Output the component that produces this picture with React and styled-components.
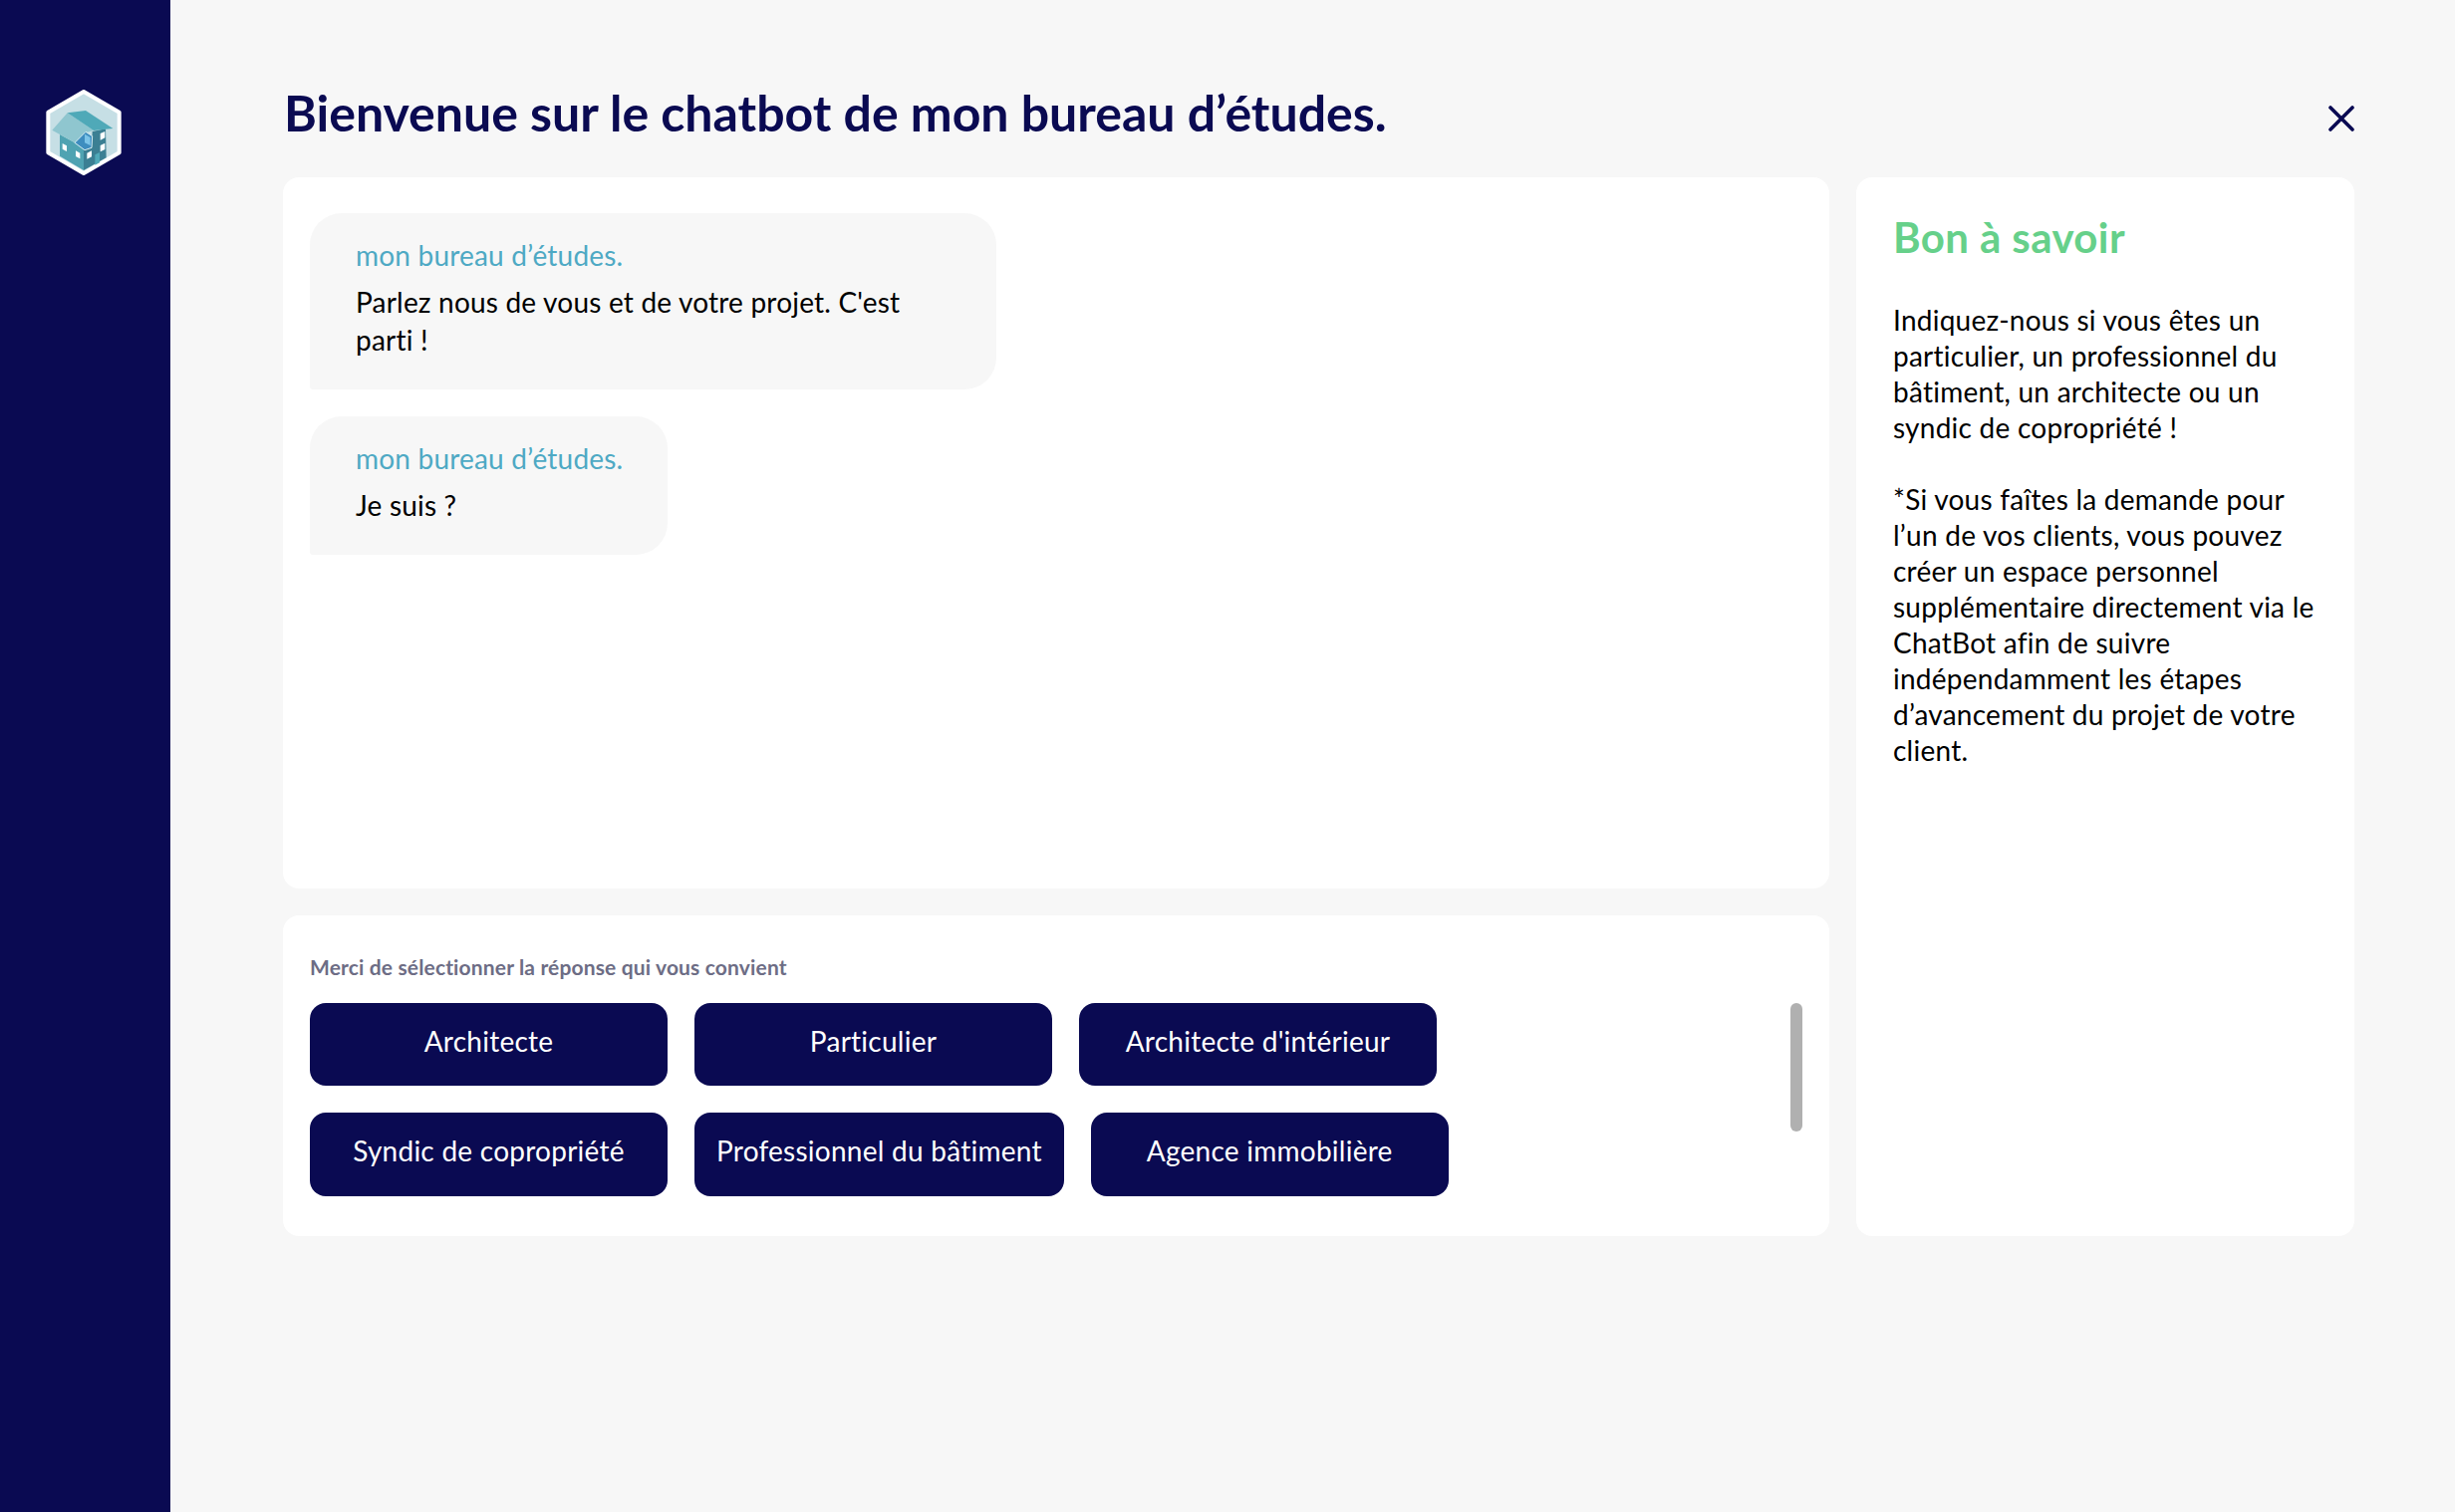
import styled, { createGlobalStyle } from 'styled-components'

const GlobalStyle = createGlobalStyle`
  html, body {
    margin: 0;
    padding: 0;
    background: #f7f7f7;
    font-family: "Lato", "Liberation Sans", sans-serif;
  }
  * {
    box-sizing: border-box;
  }
`

const Page = styled.div`
  display: flex;
  min-height: 100vh;
  background: #f7f7f7;
`

const Sidebar = styled.aside`
  flex: 0 0 171px;
  background: #0a0a52;
  padding: 90px 0 0 46px;
`

const Main = styled.main`
  flex: 1;
  padding: 88px 101px 0 113px;
`

const Header = styled.header`
  display: flex;
  justify-content: space-between;
  align-items: flex-start;
  height: 90px;
`

const Title = styled.h1`
  margin: 0 0 0 1px;
  font-size: 50px;
  line-height: 50px;
  font-weight: 700;
  color: #0a0a52;
`

const CloseButton = styled.button`
  border: 0;
  background: none;
  padding: 0;
  margin-top: 18px;
  display: flex;
  cursor: pointer;
`

const Columns = styled.div`
  display: grid;
  grid-template-columns: 1552px 500px;
  gap: 27px;
`

const LeftColumn = styled.div`
  display: flex;
  flex-direction: column;
  gap: 27px;
`

const Card = styled.section`
  background: #fff;
  border-radius: 16px;
`

const ChatCard = styled(Card)`
  height: 714px;
  padding: 36px 27px;
  display: flex;
  flex-direction: column;
  align-items: flex-start;
  gap: 27px;
`

const Bubble = styled.div`
  width: ${(p) => (p.$wide ? '689px' : 'auto')};
  padding: 23px 45px 31px 46px;
  background: #f7f7f7;
  border-radius: 32px 32px 32px 3px;
`

const Sender = styled.div`
  font-size: 28px;
  line-height: 38px;
  color: #4ea9c4;
  letter-spacing: 0.2px;
  white-space: nowrap;
`

const Message = styled.p`
  margin: 9px 0 0;
  font-size: 28px;
  line-height: 38px;
  color: #000;
  letter-spacing: 0.2px;
`

const AnswerCard = styled(Card)`
  height: 322px;
  padding: 39px 27px 0 27px;
  display: flex;
  justify-content: space-between;
`

const Hint = styled.div`
  height: 49px;
  font-size: 21px;
  line-height: 26px;
  font-weight: 700;
  color: #6d6d85;
  letter-spacing: 0.15px;
`

const ButtonRow = styled.div`
  display: flex;
  gap: 27px;
  height: ${(p) => (p.$tall ? '84px' : '83px')};
  margin-bottom: 27px;
`

const AnswerButton = styled.button`
  min-width: 359px;
  padding: 0 22px 8px;
  border: 0;
  border-radius: 16px;
  background: #0a0a52;
  color: #fff;
  font-family: inherit;
  font-size: 28px;
  letter-spacing: 0.25px;
  white-space: nowrap;
  cursor: pointer;
`

const ScrollThumb = styled.div`
  width: 12px;
  height: 129px;
  margin-top: 49px;
  border-radius: 6px;
  background: #b0b0b0;
`

const InfoCard = styled(Card)`
  padding: 30px 20px 0 37px;
`

const InfoTitle = styled.h2`
  margin: 0 0 35px;
  font-size: 42px;
  line-height: 60px;
  font-weight: 700;
  color: #66d08a;
  letter-spacing: 0.4px;
`

const InfoText = styled.p`
  margin: 0 0 36px;
  font-size: 28px;
  line-height: 36px;
  color: #000;
  letter-spacing: 0.25px;
  white-space: nowrap;
`

const Logo = () => (
  <svg width="76" height="86" viewBox="139 90 226 258">
    <path d="M252 96 L359 158 V280 L252 342 L145 280 V158 Z" fill="#c6dfe5" stroke="#fff" strokeWidth="12" strokeLinejoin="round" />
    <path d="M180 225 V290 L252 333 V268 L225 250 Z" fill="#4fa3b2" />
    <path d="M252 333 L320 295 L318 208 L278 216 L276 262 L252 270 Z" fill="#3b7f93" />
    <path d="M157 212 L203 160 L282 213 L262 218 L225 250 Z" fill="#8fc6cf" />
    <path d="M203 160 L258 153 L340 207 L282 213 Z" fill="#4fa9b8" />
    <path d="M225 250 L258 217 L278 230 L276 265 L255 272 Z" fill="#3e8dbf" stroke="#d8eef2" strokeWidth="3" />
    <path d="M255 224 L272 234 V258 L255 250 Z" fill="#7cc4e8" />
    <path d="M188 252 L201 259 V276 L188 269 Z M228 274 L241 281 V298 L228 291 Z M262 281 L276 274 V292 L262 299 Z M302 222 L316 216 V235 L302 242 Z M302 258 L316 251 V270 L302 277 Z" fill="#fff" />
    <path d="M286 286 L300 279 V310 L286 317 Z" fill="#4fa9b8" />
  </svg>
)

const CloseIcon = () => (
  <svg width="26" height="26" viewBox="0 0 26 26" fill="none" stroke="#0a0a52" strokeWidth="3.6" strokeLinecap="round">
    <path d="M2 2 L24 24 M24 2 L2 24" />
  </svg>
)

const App = () => (
  <>
    <GlobalStyle />
    <Page>
      <Sidebar>
        <Logo />
      </Sidebar>
      <Main>
        <Header>
          <Title>Bienvenue sur le chatbot de mon bureau d’études.</Title>
          <CloseButton aria-label="Fermer">
            <CloseIcon />
          </CloseButton>
        </Header>
        <Columns>
          <LeftColumn>
            <ChatCard>
              <Bubble $wide>
                <Sender>mon bureau d’études.</Sender>
                <Message>
                  Parlez nous de vous et de votre projet. C'est
                  <br />
                  parti !
                </Message>
              </Bubble>
              <Bubble>
                <Sender>mon bureau d’études.</Sender>
                <Message>Je suis ?</Message>
              </Bubble>
            </ChatCard>
            <AnswerCard>
              <div>
                <Hint>Merci de sélectionner la réponse qui vous convient</Hint>
                <ButtonRow>
                  <AnswerButton>Architecte</AnswerButton>
                  <AnswerButton>Particulier</AnswerButton>
                  <AnswerButton>Architecte d'intérieur</AnswerButton>
                </ButtonRow>
                <ButtonRow $tall>
                  <AnswerButton>Syndic de copropriété</AnswerButton>
                  <AnswerButton>Professionnel du bâtiment</AnswerButton>
                  <AnswerButton>Agence immobilière</AnswerButton>
                </ButtonRow>
              </div>
              <ScrollThumb />
            </AnswerCard>
          </LeftColumn>
          <InfoCard>
            <InfoTitle>Bon à savoir</InfoTitle>
            <InfoText>
              Indiquez-nous si vous êtes un
              <br />
              particulier, un professionnel du
              <br />
              bâtiment, un architecte ou un
              <br />
              syndic de copropriété !
            </InfoText>
            <InfoText>
              *Si vous faîtes la demande pour
              <br />
              l’un de vos clients, vous pouvez
              <br />
              créer un espace personnel
              <br />
              supplémentaire directement via le
              <br />
              ChatBot afin de suivre
              <br />
              indépendamment les étapes
              <br />
              d’avancement du projet de votre
              <br />
              client.
            </InfoText>
          </InfoCard>
        </Columns>
      </Main>
    </Page>
  </>
)

export default App
